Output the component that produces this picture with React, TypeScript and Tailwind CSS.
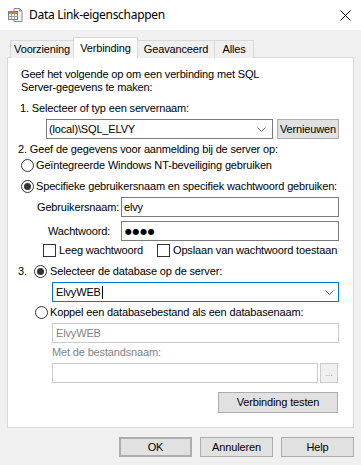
import React from "react";

const font = { fontFamily: '"Liberation Sans", Arial, sans-serif' };

const Chevron = () => (
  <svg width="9" height="5" viewBox="0 0 9 5" className="shrink-0">
    <polyline points="0.5,0.5 4.5,4.5 8.5,0.5" fill="none" stroke="#606060" strokeWidth="1" />
  </svg>
);

const Radio = ({ checked }: { checked?: boolean }) => (
  <span className="flex h-[13px] w-[13px] shrink-0 items-center justify-center rounded-full border border-[#333333] bg-white">
    {checked && <span className="h-[7px] w-[7px] rounded-full bg-[#333333]" />}
  </span>
);

const Checkbox = () => (
  <span className="h-[13px] w-[13px] shrink-0 border border-[#333333] bg-white" />
);

const Button = ({ label, className = "" }: { label: string; className?: string }) => (
  <div
    className={`flex items-center justify-center border border-[#adadad] bg-[#e1e1e1] text-[11px] tracking-[-0.15px] text-black ${className}`}
  >
    {label}
  </div>
);

const TitleIcon = () => (
  <svg width="16" height="16" viewBox="0 0 16 16">
    <path d="M7 1.5h5.5l2.5 2.5v10.5H7z" fill="#f4f4f4" stroke="#8a8a8a" />
    <path d="M12.5 1.5v2.5H15" fill="none" stroke="#8a8a8a" />
    <rect x="1.5" y="4.5" width="9" height="8" fill="#ffffff" stroke="#7d7d7d" />
    <rect x="2" y="5" width="8" height="2" fill="#e07a3c" />
    <line x1="1.5" y1="9.5" x2="10.5" y2="9.5" stroke="#9a9a9a" />
    <line x1="4.5" y1="7" x2="4.5" y2="12.5" stroke="#9a9a9a" />
    <line x1="7.5" y1="7" x2="7.5" y2="12.5" stroke="#9a9a9a" />
  </svg>
);

const Tab = ({ label, active, className = "" }: { label: string; active?: boolean; className?: string }) =>
  active ? (
    <div
      className={`flex h-[21px] items-start justify-center border-x border-t border-[#d9d9d9] bg-white pt-[2px] text-[11px] tracking-[-0.15px] ${className}`}
    >
      {label}
    </div>
  ) : (
    <div
      className={`flex h-[18px] items-center justify-center border-t border-[#d9d9d9] bg-[#f0f0f0] pb-[1px] text-[11px] tracking-[-0.15px] ${className}`}
    >
      {label}
    </div>
  );

export default function App() {
  return (
    <div className="flex h-[465px] w-[361px] flex-col bg-[#f0f0f0] text-black" style={font}>
      {/* title bar */}
      <div className="flex h-[30px] items-center bg-white">
        <div className="ml-[7px]">
          <TitleIcon />
        </div>
        <span
          className="ml-[6px] text-[12px] tracking-[-0.3px] text-black"
          style={{ fontFamily: '"Noto Sans", "Open Sans", sans-serif' }}
        >
          Data Link-eigenschappen
        </span>
        <svg width="11" height="11" viewBox="0 0 11 11" className="ml-auto mr-[10px]">
          <path d="M0.5 0.5L10.5 10.5M10.5 0.5L0.5 10.5" stroke="#000" strokeWidth="1" />
        </svg>
      </div>

      {/* tabs */}
      <div className="relative z-10 mt-[7px] mb-[-1px] flex items-end pl-[10px]">
        <Tab label="Voorziening" className="w-[63px] border-l" />
        <Tab label="Verbinding" active className="w-[65px]" />
        <Tab label="Geavanceerd" className="w-[76px]" />
        <Tab label="Alles" className="w-[40px] border-x" />
      </div>

      {/* panel */}
      <div className="mx-[7px] flex h-[371px] flex-col border border-[#d9d9d9] bg-white text-[11px] leading-[13px] tracking-[-0.15px]">
        <p className="ml-[13px] mt-[10px]">
          Geef het volgende op om een verbinding met SQL
          <br />
          Server-gegevens te maken:
        </p>
        <div className="ml-[12px] mt-[8px] h-[13px]">1. Selecteer of typ een servernaam:</div>
        <div className="ml-[38px] mt-[4px] flex gap-[4px]">
          <div className="flex h-[20px] w-[227px] items-center border border-[#7a7a7a] bg-white pl-[2px] pr-[6px]">
            <span className="flex-1">(local)\SQL_ELVY</span>
            <Chevron />
          </div>
          <Button label="Vernieuwen" className="h-[20px] w-[62px]" />
        </div>
        <div className="ml-[10px] mt-[4px] h-[13px]">2. Geef de gegevens voor aanmelding bij de server op:</div>
        <div className="ml-[13px] mt-[1px] flex h-[16px] items-center gap-[2px]">
          <Radio />
          <span>Geïntegreerde Windows NT-beveiliging gebruiken</span>
        </div>
        <div className="ml-[13px] mt-[5px] flex h-[16px] items-center gap-[2px]">
          <Radio checked />
          <span>Specifieke gebruikersnaam en specifiek wachtwoord gebruiken:</span>
        </div>
        <div className="ml-[13px] mt-[3px] flex h-[20px] items-center">
          <span className="w-[100px] pl-[16px]">Gebruikersnaam:</span>
          <div className="flex h-[20px] w-[218px] items-center border border-[#7a7a7a] pl-[2px]">elvy</div>
        </div>
        <div className="ml-[13px] mt-[4px] flex h-[20px] items-center">
          <span className="w-[100px] pl-[27px]">Wachtwoord:</span>
          <div className="flex h-[20px] w-[218px] items-center border border-[#7a7a7a] pl-[3px]">
            <span className="text-[8px] tracking-[0.6px]" style={{ fontFamily: '"DejaVu Sans", sans-serif' }}>
              ●●●●
            </span>
          </div>
        </div>
        <div className="ml-[35px] mt-[3px] flex h-[13px] items-center">
          <div className="flex w-[114px] items-center gap-[3px]">
            <Checkbox />
            <span>Leeg wachtwoord</span>
          </div>
          <div className="flex items-center gap-[3px]">
            <Checkbox />
            <span>Opslaan van wachtwoord toestaan</span>
          </div>
        </div>
        <div className="ml-[10px] mt-[6px] flex h-[16px] items-center">
          <span className="w-[16px]">3.</span>
          <Radio checked />
          <span className="ml-[3px]">Selecteer de database op de server:</span>
        </div>
        <div className="ml-[44px] mt-[3px] flex h-[20px] w-[287px] items-center border border-[#0078d7] bg-white pl-[3px] pr-[4px]">
          <span>ElvyWEB</span>
          <span className="ml-[1px] h-[13px] w-px bg-black" />
          <span className="flex-1" />
          <Chevron />
        </div>
        <div className="ml-[27px] mt-[2px] flex h-[16px] items-center gap-[2px]">
          <Radio />
          <span>Koppel een databasebestand als een databasenaam:</span>
        </div>
        <div className="ml-[44px] mt-[3px] flex h-[20px] w-[287px] items-center border border-[#cccccc] bg-white pl-[3px] text-[#838383]">
          ElvyWEB
        </div>
        <div className="ml-[44px] mt-[3px] h-[13px] text-[#838383]">Met de bestandsnaam:</div>
        <div className="ml-[44px] mt-[4px] flex gap-[2px]">
          <div className="h-[20px] w-[266px] border border-[#cccccc] bg-white" />
          <div className="flex h-[20px] w-[18px] items-end justify-center border border-[#cccccc] bg-[#f0f0f0] pb-[4px] text-[9px] leading-[9px] text-[#a0a0a0]">
            ...
          </div>
        </div>
        <Button label="Verbinding testen" className="ml-[210px] mt-[9px] h-[21px] w-[120px]" />
      </div>

      {/* dialog buttons */}
      <div className="mt-[9px] flex justify-end gap-[8px] pr-[7px]">
        <Button label="OK" className="h-[20px] w-[73px] border-2 border-[#0078d7]" />
        <Button label="Annuleren" className="h-[20px] w-[73px]" />
        <Button label="Help" className="h-[20px] w-[73px]" />
      </div>
    </div>
  );
}
